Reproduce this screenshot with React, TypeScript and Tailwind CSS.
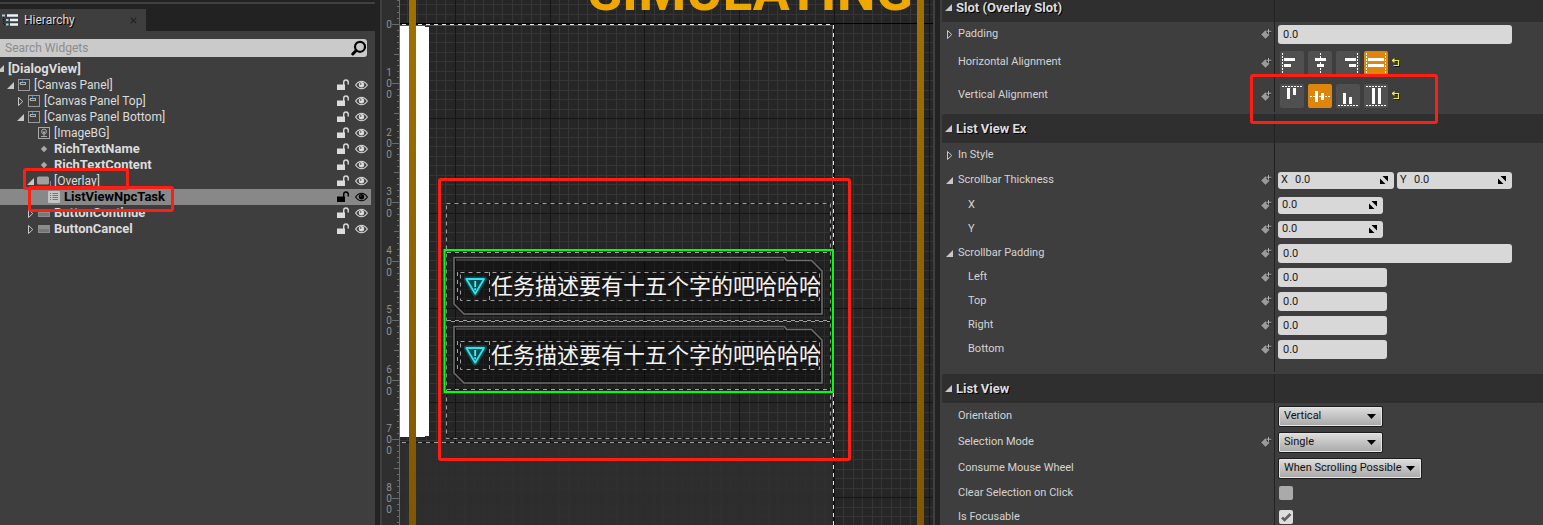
import React from "react";

/* ---------- icons ---------- */

function Arrow({ open }: { open: boolean }) {
  return open ? (
    <svg className="block h-[9px] w-[7px]" viewBox="0 0 7 9" aria-hidden="true">
      <path d="M7 1V8H0Z" fill="#c8c8c8" />
    </svg>
  ) : (
    <svg className="block h-[9px] w-[7px]" viewBox="0 0 7 9" aria-hidden="true">
      <path d="M1.5 0.5V8.5L5.8 4.5Z" fill="none" stroke="#c8c8c8" />
    </svg>
  );
}

function LockOpen() {
  return (
    <svg className="block h-3 w-3" viewBox="0 0 12 12" aria-hidden="true">
      <path d="M0 5.5H8V11H0Z" fill="currentColor" />
      <path d="M6.7 6V3.2Q6.7 1 9 1Q11.2 1 11.2 3.2V5.4" fill="none" stroke="currentColor" strokeWidth="1.4" />
    </svg>
  );
}

function Eye() {
  return (
    <svg className="block h-3 w-[13px]" viewBox="0 0 13 12" aria-hidden="true">
      <path d="M0.6 6Q3.2 2.2 6.5 2.2T12.4 6Q9.8 9.8 6.5 9.8T0.6 6Z" fill="none" stroke="currentColor" strokeWidth="1.1" />
      <circle cx="6.5" cy="5.8" r="2.7" fill="currentColor" />
      <circle cx="5.7" cy="5" r="0.8" fill="#3e3e3e" />
    </svg>
  );
}

function TreeIcon({ kind }: { kind: string }) {
  return (
    <svg className="block h-3 w-3 shrink-0 overflow-visible" viewBox="0 0 12 12" aria-hidden="true">
      {kind === "canvas" && (
        <g fill="none">
          <rect x="0.5" y="0.5" width="11" height="11" stroke="#9a9a9a" />
          <rect x="2.5" y="3.5" width="5" height="2" stroke="#b0b0b0" />
          <path d="M4.5 1V3M1 4.5H2" stroke="#2d8ad8" />
        </g>
      )}
      {kind === "image" && (
        <g fill="none" stroke="#a8a8a8">
          <rect x="0.5" y="0.5" width="11" height="11" />
          <circle cx="6" cy="4.6" r="2.5" />
          <path d="M6 4V9.5M3 9.5H9M4.5 4.5L6 6L7.5 4.5" />
        </g>
      )}
      {kind === "dot" && <path d="M6 2.8L9.2 6L6 9.2L2.8 6Z" fill="#a8a8a8" />}
      {kind === "overlay" && (
        <g>
          <rect x="-1" y="1.5" width="12" height="8" rx="1.5" fill="#a0a0a0" />
          <path d="M1 11.5H3M5 11.5H8M10 11.5H12.5V6" fill="none" stroke="#8a8a8a" />
        </g>
      )}
      {kind === "list" && (
        <g>
          <rect x="0" y="0" width="12" height="12" rx="1" fill="#c4c4c4" />
          <path d="M2 2.5H3M4.5 2.5H10M2 4.5H3M4.5 4.5H10M2 6.5H3M4.5 6.5H10M2 8.5H3M4.5 8.5H10" stroke="#777" />
        </g>
      )}
      {kind === "button" && (
        <g>
          <rect x="0.5" y="2.5" width="11" height="7" fill="#777" stroke="#8c8c8c" />
          <rect x="1" y="3" width="10" height="3" fill="#8c8c8c" />
        </g>
      )}
    </svg>
  );
}

function KeyIcon() {
  return (
    <svg className="block h-3 w-3" viewBox="0 0 12 12" aria-hidden="true">
      <path d="M0.8 6.5L5.5 1.8L8 4.3H9.7V7L5.5 11.3Z" fill="#9a9a9a" stroke="#222" strokeWidth="0.6" />
      <path d="M8.5 0.5V6M6 3.2H11.6" stroke="#2a2a2a" strokeWidth="2.4" />
      <path d="M8.5 0.8V5.6M6.2 3.2H11.4" stroke="#b0b0b0" strokeWidth="1" />
    </svg>
  );
}

/* ---------- hierarchy ---------- */

type Node = { label: string; depth: number; icon?: string; open?: boolean; bold?: boolean; selected?: boolean };

const nodes: Node[] = [
  { label: "[Canvas Panel]", depth: 0, icon: "canvas", open: true },
  { label: "[Canvas Panel Top]", depth: 1, icon: "canvas", open: false },
  { label: "[Canvas Panel Bottom]", depth: 1, icon: "canvas", open: true },
  { label: "[ImageBG]", depth: 2, icon: "image" },
  { label: "RichTextName", depth: 2, icon: "dot", bold: true },
  { label: "RichTextContent", depth: 2, icon: "dot", bold: true },
  { label: "[Overlay]", depth: 2, icon: "overlay", open: true },
  { label: "ListViewNpcTask", depth: 3, icon: "list", bold: true, selected: true },
  { label: "ButtonContinue", depth: 2, icon: "button", open: false, bold: true },
  { label: "ButtonCancel", depth: 2, icon: "button", open: false, bold: true },
];

const indents = ["pl-[7px]", "pl-[17px]", "pl-[27px]", "pl-[37px]"];

function TreeRow({ node }: { node: Node }) {
  return (
    <li
      className={`flex h-4 items-center gap-1 pr-[3px] ${indents[node.depth]} ${
        node.selected ? "bg-[#888888] text-black" : "text-[#dcdcdc]"
      }`}
    >
      <span className="w-[7px] shrink-0">
        {node.open !== undefined && (
          <button type="button" aria-label={`Toggle ${node.label}`} className="block">
            <Arrow open={node.open} />
          </button>
        )}
      </span>
      <TreeIcon kind={node.icon ?? "dot"} />
      <span className={`flex-1 truncate leading-4 ${node.bold ? "text-[13px] font-bold" : "text-[12px]"}`}>{node.label}</span>
      <button type="button" aria-label={`Lock ${node.label}`} className="mr-[2px]">
        <LockOpen />
      </button>
      <button type="button" aria-label={`Show ${node.label}`}>
        <Eye />
      </button>
    </li>
  );
}

function Hierarchy() {
  return (
    <aside className="relative flex w-[375px] shrink-0 flex-col bg-[#222222]">
      <div className="h-1 border-b-2 border-[#404040]" />
      <div className="flex pt-[5px]">
        <div className="flex h-[22px] w-[146px] items-center bg-[#3e3e3e] pr-2 pl-[2px]">
          <svg className="h-3 w-4" viewBox="0 0 16 12" aria-hidden="true">
            <path d="M5 1.5H16M8 6H16M8 10.5H16" stroke="#e8f4fa" strokeWidth="2.4" />
            <path d="M0 1.5H3M4 6H6.5M4 10.5H6.5" stroke="#9fd0e6" strokeWidth="2.2" />
            <path d="M1.5 3V10.5H3M1.5 6H3" fill="none" stroke="#151515" strokeDasharray="1 1" />
          </svg>
          <h2 className="ml-1.5 flex-1 text-[12px] text-[#dcdcdc] [text-shadow:1px_1px_0_#000]">Hierarchy</h2>
          <button type="button" aria-label="Close tab" className="p-px">
            <svg className="h-[7px] w-[7px]" viewBox="0 0 7 7" aria-hidden="true">
              <path d="M0.8 0.8L6.2 6.2M6.2 0.8L0.8 6.2" stroke="#222" strokeWidth="1.2" />
            </svg>
          </button>
        </div>
      </div>
      <div className="flex-1 bg-[#3e3e3e] pt-2">
        <label className="mr-2 flex h-[18px] items-center rounded-r-[3px] bg-[#cacaca] pl-[5px]">
          <input
            type="text"
            aria-label="Search Widgets"
            placeholder="Search Widgets"
            className="min-w-0 flex-1 bg-transparent text-[12px] leading-4 text-black outline-none placeholder:text-[#8c8c8c]"
          />
          <svg className="h-4 w-4" viewBox="0 0 16 16" aria-hidden="true">
            <circle cx="9" cy="6.8" r="5" fill="none" stroke="#000" strokeWidth="2.2" />
            <path d="M5.2 10.5L1.8 14" stroke="#000" strokeWidth="3" strokeLinecap="round" />
          </svg>
        </label>
        <div className="flex h-5 items-end gap-1 overflow-hidden text-[#dcdcdc]">
          <svg className="mb-1 h-[9px] w-1 shrink-0" viewBox="3 0 4 9" aria-hidden="true">
            <path d="M7 1V8H0Z" fill="#c8c8c8" />
          </svg>
          <span className="text-[13px] leading-4 font-bold">[DialogView]</span>
        </div>
        <ul className="mr-1">
          {nodes.map((n) => (
            <TreeRow key={n.label} node={n} />
          ))}
        </ul>
      </div>
      <div className="pointer-events-none absolute top-[168px] left-[23px] h-[22px] w-[106px] rounded-[3px] border-3 border-[#ff1e12]" />
      <div className="pointer-events-none absolute top-[186px] left-[28px] h-[26px] w-[146px] rounded-[3px] border-3 border-[#ff1e12]" />
    </aside>
  );
}

/* ---------- designer canvas ---------- */

const range = (n: number) => Array.from({ length: n }, (_, i) => i);
const UNIT = 59.25;

function Ruler() {
  return (
    <div className="relative w-5 shrink-0 overflow-hidden border-l-2 border-[#404040] bg-[#2f2f2f]">
      <svg className="absolute inset-0 h-full w-full" aria-hidden="true">
        {range(200).map((i) => {
          const len = i % 10 === 4 ? 7 : i % 5 === 4 ? 5 : 2;
          return (
            <rect key={i} x={17 - len} y={Math.round(24 + ((i - 4) * UNIT) / 10)} width={len} height="1" fill="#6a6a6a" />
          );
        })}
        <rect x="17" y="0" width="1" height="100%" fill="#6a6a6a" />
      </svg>
      {range(9).map((i) => (
        <div
          key={i}
          className="absolute left-[3px] flex w-2 -translate-y-1/2 flex-col items-center text-[10px] leading-[11px] text-[#909090]"
          style={{ top: Math.round(24 + i * UNIT) }}
        >
          {String(i * 100)
            .split("")
            .map((d, k) => (
              <span key={k}>{d}</span>
            ))}
        </div>
      ))}
    </div>
  );
}

function Grid() {
  const step = 9.477;
  const lines = range(130);
  return (
    <g>
      {lines.map((i) =>
        i % 10 ? <rect key={`v${i}`} x={Math.round(360 + i * step)} y="0" width="1" height="100%" fill="#353535" /> : null
      )}
      {lines.map((i) =>
        i % 10 ? <rect key={`h${i}`} x="400" y={Math.round(i * step - 71.5)} width="100%" height="1" fill="#353535" /> : null
      )}
      {lines.map((i) =>
        i % 10 ? null : <rect key={`V${i}`} x={Math.round(360 + i * step)} y="0" width="1" height="100%" fill="#151515" />
      )}
      {lines.map((i) =>
        i % 10 ? null : (
          <rect key={`H${i}`} x="400" y={Math.round(i * step - 71.5)} width="100%" height="1" fill={i === 10 ? "#000" : "#151515"} />
        )
      )}
    </g>
  );
}

function Dashed({ d, color = "#a0a0a0" }: { d: string; color?: string }) {
  return (
    <g fill="none">
      <path d={d} stroke="#111" />
      <path d={d} stroke={color} strokeDasharray="4 4" />
    </g>
  );
}

function ItemFrame({ y }: { y: number }) {
  return (
    <g transform={`translate(0 ${y})`}>
      <path
        d="M454 257.5H784.5L786.5 260.5H811.5L822 271V314H464L454 304Z"
        fill="#000"
        fillOpacity="0.32"
        stroke="#000"
        strokeOpacity="0.25"
        strokeWidth="4"
      />
      <path d="M454 257.5H784.5L786.5 260.5H811.5L822 271V314H464L454 304Z" fill="none" stroke="#6c6c6c" strokeWidth="1.6" />
      <path d="M456 260H784" stroke="#3c3c3c" strokeWidth="2" />
      <Dashed d="M457.5 272V300" />
      <Dashed d="M460.5 272.5H819.5V300.5H460.5Z" />
      <Dashed d="M489.5 272V300" />
      <path d="M466.5 279H484.5L475 294Z" fill="none" stroke="#19b8c4" strokeOpacity="0.3" strokeWidth="5" strokeLinejoin="round" />
      <path d="M466.3 279H484L475.2 293.8Z" fill="#0b4a52" stroke="#2ae6ee" strokeWidth="1.8" strokeLinejoin="round" />
      <path d="M475.2 281V287M475.2 288.3V290.3" stroke="#4af4fa" strokeWidth="1.8" />
    </g>
  );
}

function Canvas() {
  return (
    <div className="relative min-w-0 flex-1 overflow-hidden bg-[#262626]">
      <svg className="absolute inset-0 h-full w-full" aria-hidden="true">
        <defs>
          <linearGradient id="bar" x1="0" y1="0" x2="0" y2="1">
            <stop offset="0" stopColor="#a07000" />
            <stop offset="1" stopColor="#805700" />
          </linearGradient>
        </defs>
        <g transform="translate(-400 0)">
          <Grid />
          <rect x="400" y="442" width="434" height="1000" fill="#2f2f2f" fillOpacity="0.9" />
          <path d="M400 25H425V27H429V436H425V437H400Z" fill="#fff" />
          <path d="M400 25.5H832.5V442" fill="none" stroke="#5a5a5a" />
          <Dashed d="M402 24.5H833.5V1442" color="#e8e8e8" />
          <Dashed d="M402 442.5H831" />
          <Dashed d="M446.5 203.5H830.5V438.5H446.5Z" />
          <path d="M446 251H831V390H446Z" fill="#000" fillOpacity="0.12" />
          <Dashed d="M447 252.5H830M447 389.5H830M447 320.5H830" />
          <path d="M451 321.5H830" stroke="#a0a0a0" strokeDasharray="4 4" />
          <ItemFrame y={0} />
          <ItemFrame y={69} />
          <rect x="444.5" y="250" width="388.5" height="142" fill="none" stroke="#00ff0c" strokeWidth="2" />
          <rect x="409" y="0" width="7" height="100%" fill="url(#bar)" />
          <rect x="917" y="0" width="7" height="100%" fill="url(#bar)" />
        </g>
      </svg>
      <div className="absolute top-[-36px] right-[20px] text-[55px] leading-[55px] font-bold text-[#efa800]">SIMULATING</div>
      <ul className="absolute top-[250px] left-[91px] text-[22px] leading-[69px] whitespace-nowrap text-[#f4f4f4]">
        <li className="font-['Noto_Sans_CJK_SC',sans-serif]">任务描述要有十五个字的吧哈哈哈</li>
        <li className="font-['Noto_Sans_CJK_SC',sans-serif]">任务描述要有十五个字的吧哈哈哈</li>
      </ul>
      <div className="pointer-events-none absolute top-[178px] left-[38px] h-[283px] w-[413px] rounded-[3px] border-3 border-[#ff1e12]" />
    </div>
  );
}

/* ---------- details ---------- */

function Section({ title, className = "", children }: { title: string; className?: string; children: React.ReactNode }) {
  return (
    <section className={className}>
      <h3 className="flex h-[29px] rounded-tl-[3px] bg-[#2f2f2f]">
        <span className="flex w-[333px] items-center gap-1 border-r border-[#222222] pl-[3px] text-[13px] font-bold text-[#dedede] [text-shadow:1px_1px_0_#000]">
          <Arrow open />
          {title}
        </span>
      </h3>
      {children}
    </section>
  );
}

type RowProps = {
  label: string;
  htmlFor?: string;
  open?: boolean;
  nested?: boolean;
  bindable?: boolean;
  height?: string;
  children?: React.ReactNode;
};

function Row({ label, htmlFor, open, nested, bindable = true, height = "h-6", children }: RowProps) {
  return (
    <div className={`flex ${height}`}>
      <div className="flex w-[333px] shrink-0 items-center border-r border-[#222222] pr-[2px] pl-1">
        <span className="w-3 shrink-0">
          {open !== undefined && (
            <button type="button" aria-label={`Toggle ${label}`} className="block">
              <Arrow open={open} />
            </button>
          )}
        </span>
        <label htmlFor={htmlFor} className={`flex-1 text-[11px] text-[#d4d4d4] ${nested ? "pl-[10px]" : ""}`}>
          {label}
        </label>
        {bindable && (
          <button type="button" aria-label={`Bind ${label}`}>
            <KeyIcon />
          </button>
        )}
      </div>
      <div className="flex min-w-0 flex-1 items-center pl-[3px]">{children}</div>
    </div>
  );
}

function Field({ id, wide }: { id: string; wide?: boolean }) {
  return (
    <input
      id={id}
      type="text"
      defaultValue="0.0"
      className={`h-[19px] rounded-[3px] bg-[#d8d8d8] px-[5px] text-[11px] text-[#1c1c1c] outline-none ${
        wide ? "w-[234px]" : "w-[109px]"
      }`}
    />
  );
}

function Spin({ id, axis, width }: { id: string; axis?: string; width: string }) {
  return (
    <label htmlFor={id} className={`flex h-[17px] items-center rounded-[3px] bg-[#d8d8d8] pr-[6px] text-[11px] text-[#1c1c1c] ${width} ${axis ? "pl-[3px]" : "pl-1"}`}>
      {axis && <span className="w-[14px]">{axis}</span>}
      <input id={id} type="text" defaultValue="0.0" className="min-w-0 flex-1 bg-transparent leading-4 outline-none" />
      <svg className="h-2 w-2" viewBox="0 0 8 8" aria-hidden="true">
        <path d="M2.5 0H8V5.5ZM0 2.5V8H5.5Z" fill="#000" />
      </svg>
    </label>
  );
}

type Align = { name: string; dash: string; bars: string };

const horizontal: Align[] = [
  { name: "Left", dash: "M2.5 2V22", bars: "M4 7H15V10H4ZM4 13H11V16H4Z" },
  { name: "Center", dash: "M12.5 2V22", bars: "M7 7H18V10H7ZM9 13H16V16H9Z" },
  { name: "Right", dash: "M21.5 2V22", bars: "M9 7H20V10H9ZM13 13H20V16H13Z" },
  { name: "Fill", dash: "M2.5 2V22M21.5 2V22", bars: "M4 7H20V10H4ZM4 13H20V16H4Z" },
];

const vertical: Align[] = [
  { name: "Top", dash: "M2 2.5H22", bars: "M7 4H10V15H7ZM13 4H16V11H13Z" },
  { name: "Center", dash: "M2 12.5H22", bars: "M7 7H10V18H7ZM13 9H16V16H13Z" },
  { name: "Bottom", dash: "M2 21.5H22", bars: "M7 9H10V20H7ZM13 13H16V20H13Z" },
  { name: "Fill", dash: "M2 2.5H22M2 21.5H22", bars: "M8 4H11V20H8ZM14 4H17V20H14Z" },
];

function AlignGroup({ group, options, active }: { group: string; options: Align[]; active: number }) {
  return (
    <div role="group" aria-label={group} className="flex items-center gap-1 pl-[2px]">
      {options.map((o, i) => (
        <button
          key={o.name}
          type="button"
          aria-label={`${group} ${o.name}`}
          aria-pressed={i === active}
          className={`rounded-[2px] ${i === active ? "bg-[#de860c]" : "bg-[#505050]"}`}
        >
          <svg className="block h-6 w-6" viewBox="0 0 24 24" aria-hidden="true">
            <path d={o.dash} stroke="#fff" strokeDasharray="2 1" />
            <path d={o.bars} fill="#fff" />
          </svg>
        </button>
      ))}
      <button type="button" aria-label={`Reset ${group}`}>
        <svg className="block h-[9px] w-[9px]" viewBox="1 0 9 9" aria-hidden="true">
          <path d="M3 3.5H8.5V8.5H3.5" fill="none" stroke="#111" />
          <path d="M1 2.5H7.5V7.5H2.5" fill="none" stroke="#f0ec3c" strokeWidth="1.2" />
          <path d="M0.5 2.5L3.5 0V5Z" fill="#f0ec3c" />
        </svg>
      </button>
    </div>
  );
}

function Select({ id, value, width }: { id: string; value: string; width: string }) {
  return (
    <div className={`relative ${width}`}>
      <select
        id={id}
        defaultValue={value}
        className="block h-[21px] w-full appearance-none rounded-[2px] border border-[#1c1c1c] bg-linear-to-b from-[#dedede] to-[#a8a8a8] pl-[5px] text-[11px] text-[#101010] shadow-[inset_0_0_0_1px_#e4e4e4] outline-none"
      >
        <option>{value}</option>
      </select>
      <svg className="pointer-events-none absolute top-2 right-[7px] h-[5px] w-[9px]" viewBox="0 0 9 5" aria-hidden="true">
        <path d="M0 0H9L4.5 5Z" fill="#000" />
      </svg>
    </div>
  );
}

function Check({ id, checked }: { id: string; checked: boolean }) {
  return (
    <span className="relative ml-px block h-[14px] w-[14px]">
      <input
        id={id}
        type="checkbox"
        defaultChecked={checked}
        className="peer block h-[14px] w-[14px] appearance-none rounded-[2px] bg-[#aaaaaa] checked:bg-[#dddddd]"
      />
      <svg className="pointer-events-none absolute inset-0 hidden peer-checked:block" viewBox="0 0 14 14" aria-hidden="true">
        <path d="M3 7.5L5.5 10L11.5 4" fill="none" stroke="#606060" strokeWidth="2.6" />
      </svg>
    </span>
  );
}

function Details() {
  return (
    <aside className="relative w-[603px] shrink-0 overflow-hidden bg-[#3e3e3e] pl-[2px]">
      <Section title="Slot (Overlay Slot)" className="-mt-[7px]">
        <Row label="Padding" htmlFor="padding" open={false}>
          <Field id="padding" wide />
        </Row>
        <Row label="Horizontal Alignment" height="h-[33px]">
          <AlignGroup group="Horizontal Alignment" options={horizontal} active={3} />
        </Row>
        <Row label="Vertical Alignment" height="h-[33px]">
          <AlignGroup group="Vertical Alignment" options={vertical} active={1} />
        </Row>
      </Section>
      <Section title="List View Ex" className="mt-[2px]">
        <Row label="In Style" open={false} bindable={false} />
        <Row label="Scrollbar Thickness" htmlFor="thickness-x" open height="h-[26px]">
          <div className="flex gap-[3px]">
            <Spin id="thickness-x" axis="X" width="w-[116px]" />
            <Spin id="thickness-y" axis="Y" width="w-[115px]" />
          </div>
        </Row>
        <Row label="X" htmlFor="x" nested>
          <Spin id="x" width="w-[105px]" />
        </Row>
        <Row label="Y" htmlFor="y" nested>
          <Spin id="y" width="w-[105px]" />
        </Row>
        <Row label="Scrollbar Padding" htmlFor="scroll-padding" open>
          <Field id="scroll-padding" wide />
        </Row>
        {["Left", "Top", "Right", "Bottom"].map((side) => (
          <Row key={side} label={side} htmlFor={side} nested>
            <Field id={side} />
          </Row>
        ))}
        <div className="h-[11px] w-[333px] border-r border-[#222222]" />
      </Section>
      <Section title="List View" className="mt-[2px]">
        <Row label="Orientation" htmlFor="orientation" bindable={false} height="h-[26px]">
          <Select id="orientation" value="Vertical" width="w-[105px]" />
        </Row>
        <Row label="Selection Mode" htmlFor="selection" height="h-[26px]">
          <Select id="selection" value="Single" width="w-[105px]" />
        </Row>
        <Row label="Consume Mouse Wheel" htmlFor="wheel" bindable={false} height="h-[26px]">
          <Select id="wheel" value="When Scrolling Possible" width="w-[144px]" />
        </Row>
        <Row label="Clear Selection on Click" htmlFor="clear" bindable={false}>
          <Check id="clear" checked={false} />
        </Row>
        <Row label="Is Focusable" htmlFor="focusable" bindable={false}>
          <Check id="focusable" checked />
        </Row>
      </Section>
      <div className="pointer-events-none absolute top-[74px] left-[310px] h-[50px] w-[188px] rounded-[3px] border-3 border-[#ff1e12]" />
    </aside>
  );
}

export default function App() {
  return (
    <main className="flex h-screen overflow-hidden bg-[#222222] font-['Roboto',sans-serif]">
      <Hierarchy />
      <div className="ml-[5px] flex min-w-0 flex-1">
        <Ruler />
        <Canvas />
        <div className="mr-[5px] w-[2px] shrink-0 bg-[#404040]" />
      </div>
      <Details />
    </main>
  );
}
